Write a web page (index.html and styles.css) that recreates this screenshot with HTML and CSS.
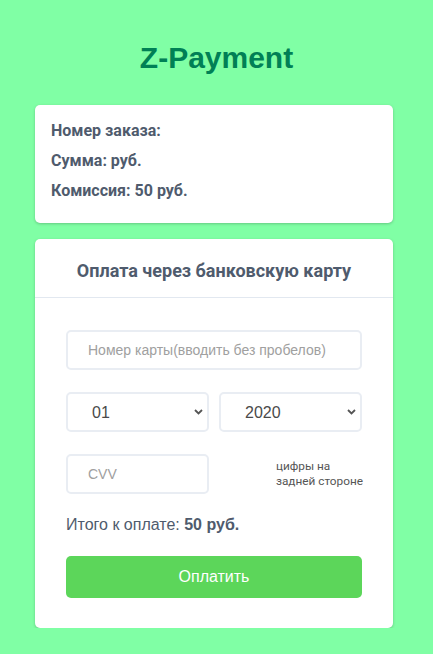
FILE: index.html
```html
<!DOCTYPE html>
<html lang="ru">
<head>
<meta charset="utf-8">
<title>Z-Payment</title>
<link rel="stylesheet" href="styles.css">
</head>
<body>
<h1 class="title">Z-Payment</h1>
<div class="page">
  <div class="card info">
    <div class="info-line">Номер заказа:</div>
    <div class="info-line">Сумма: руб.</div>
    <div class="info-line">Комиссия: 50 руб.</div>
  </div>
  <div class="card pay">
    <div class="pay-head">Оплата через банковскую карту</div>
    <form class="pay-body">
      <input class="field" type="text" placeholder="Номер карты(вводить без пробелов)">
      <div class="row">
        <div class="select-wrap">
          <select class="field select"><option>01</option></select>
          <svg class="chev" width="9" height="6" viewBox="0 0 9 6"><path d="M1 1l3.5 3.5L8 1" fill="none" stroke="#555" stroke-width="1.8"/></svg>
        </div>
        <div class="select-wrap">
          <select class="field select"><option>2020</option></select>
          <svg class="chev" width="9" height="6" viewBox="0 0 9 6"><path d="M1 1l3.5 3.5L8 1" fill="none" stroke="#555" stroke-width="1.8"/></svg>
        </div>
      </div>
      <div class="row">
        <input class="field cvv" type="text" placeholder="CVV">
        <div class="hint">цифры на<br>задней стороне</div>
      </div>
      <div class="total">Итого к оплате: <b>50 руб.</b></div>
      <button class="btn" type="button">Оплатить</button>
    </form>
  </div>
</div>
</body>
</html>
```

FILE: styles.css
```css
html, body {
  margin: 0;
  padding: 0;
  background: #80ffa5;
}
.title {
  margin: 0;
  padding-top: 41px;
  font-family: "Liberation Sans", Arial, sans-serif;
  font-weight: bold;
  font-size: 30px;
  line-height: 34px;
  text-align: center;
  color: #008055;
}
.page {
  padding: 30px 0 0 35px;
}
.card {
  background: #fff;
  border-radius: 5px;
  box-shadow: 0 1px 3px rgba(0,0,0,0.22);
  width: 358px;
  box-sizing: border-box;
}
.info {
  padding: 11px 16px 17px;
  font-family: Roboto, "Liberation Sans", sans-serif;
  font-weight: bold;
  font-size: 16px;
  line-height: 30px;
  color: #4f5b6d;
}
.pay {
  margin-top: 16px;
}
.pay-head {
  padding: 20px 10px 14px;
  border-bottom: 1px solid #e2e8f0;
  font-family: Roboto, "Liberation Sans", sans-serif;
  font-weight: bold;
  font-size: 18px;
  line-height: 24px;
  text-align: center;
  color: #4f5b6d;
}
.pay-body {
  padding: 32px 31px 30px;
  display: flex;
  flex-direction: column;
  margin: 0;
}
.field {
  box-sizing: border-box;
  height: 40px;
  border: 2px solid #e9edf3;
  border-radius: 5px;
  background: #fff;
  padding: 0 20px;
  font-family: "Liberation Sans", Arial, sans-serif;
  font-size: 14px;
  color: #444;
  outline: none;
  width: 100%;
  margin: 0;
}
.field::placeholder {
  color: #a0a0a0;
}
.row {
  display: flex;
  gap: 10px;
  margin-top: 22px;
  align-items: center;
}
.select-wrap {
  position: relative;
  flex: 1;
}
.select {
  appearance: none;
  -webkit-appearance: none;
  padding-left: 24px;
  font-size: 16px;
  color: #4a4a4a;
}
.chev {
  position: absolute;
  right: 6px;
  top: 17px;
}
.cvv {
  width: 143px;
  flex: none;
}
.hint {
  margin-left: auto;
  margin-right: -1px;
  font-family: Roboto, "Liberation Sans", sans-serif;
  font-size: 11.8px;
  line-height: 15px;
  color: #555;
}
.total {
  margin-top: 20px;
  font-family: "Liberation Sans", Arial, sans-serif;
  font-size: 16px;
  line-height: 21px;
  color: #4f5b6d;
}
.total b {
  font-weight: bold;
}
.btn {
  margin-top: 21px;
  height: 42px;
  border: none;
  border-radius: 5px;
  background: #5cd65a;
  color: #fff;
  font-family: "Liberation Sans", Arial, sans-serif;
  font-size: 16px;
  cursor: pointer;
}
```
